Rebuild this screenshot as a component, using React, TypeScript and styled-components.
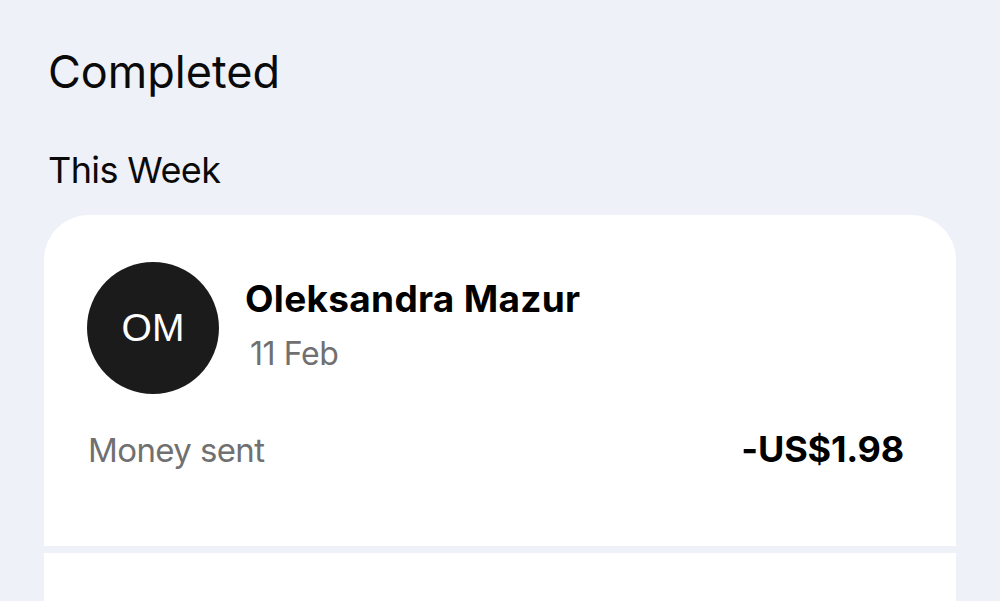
import React from 'react';
import styled, {createGlobalStyle} from 'styled-components';

const GlobalStyle = createGlobalStyle`
  html, body {
    margin: 0;
    padding: 0;
    background: #eef1f8;
    font-family: Inter, "Noto Sans", sans-serif;
    color: #0a0a0a;
  }
`;

const Page = styled.div`
  height: 601px;
  overflow: hidden;
  padding: 44px 44px 0 44px;
  box-sizing: border-box;
  display: flex;
  flex-direction: column;
`;

const Title = styled.h1`
  margin: 0 0 0 4px;
  font-size: 45px;
  line-height: 56px;
  font-weight: 400;
  letter-spacing: 0;
`;

const SectionTitle = styled.h2`
  margin: 48px 0 0 4px;
  font-size: 36px;
  line-height: 44px;
  font-weight: 400;
  letter-spacing: -0.6px;
`;

const List = styled.div`
  margin-top: 23px;
  display: flex;
  flex-direction: column;
  gap: 7px;
`;

const Card = styled.div<{$first?: boolean}>`
  background: #fff;
  border-radius: ${p => (p.$first ? '45px 45px 0 0' : '0')};
  padding: 47px 52px 0 43px;
  height: ${p => (p.$first ? '331px' : '120px')};
  box-sizing: border-box;
`;

const Head = styled.div`
  display: flex;
  align-items: flex-start;
  gap: 26px;
`;

const Avatar = styled.div`
  width: 132px;
  height: 132px;
  border-radius: 50%;
  background: #1b1b1b;
  color: #fff;
  display: flex;
  align-items: center;
  justify-content: center;
  font-family: "Liberation Sans", Arial, sans-serif;
  font-size: 39px;
  flex-shrink: 0;
`;

const Who = styled.div`
  display: flex;
  flex-direction: column;
  padding-top: 15px;
`;

const Name = styled.div`
  font-size: 37px;
  line-height: 44px;
  font-weight: 700;
  letter-spacing: 0.3px;
  color: #000;
`;

const DateText = styled.div`
  margin-top: 14px;
  margin-left: 5px;
  font-size: 32px;
  line-height: 38px;
  color: #707070;
  letter-spacing: -0.4px;
`;

const Row = styled.div`
  margin-top: 35px;
  display: flex;
  justify-content: space-between;
  align-items: baseline;
  margin-left: 1px;
`;

const Kind = styled.div`
  font-size: 33px;
  line-height: 40px;
  color: #707070;
  letter-spacing: -0.6px;
`;

const Amount = styled.div`
  font-size: 36px;
  line-height: 40px;
  font-weight: 700;
  letter-spacing: -0.2px;
  color: #000;
`;

export default function App() {
  return (
    <>
      <GlobalStyle />
      <Page>
        <Title>Completed</Title>
        <SectionTitle>This Week</SectionTitle>
        <List>
          <Card $first>
            <Head>
              <Avatar>OM</Avatar>
              <Who>
                <Name>Oleksandra Mazur</Name>
                <DateText>11 Feb</DateText>
              </Who>
            </Head>
            <Row>
              <Kind>Money sent</Kind>
              <Amount>-US$1.98</Amount>
            </Row>
          </Card>
          <Card />
        </List>
      </Page>
    </>
  );
}
